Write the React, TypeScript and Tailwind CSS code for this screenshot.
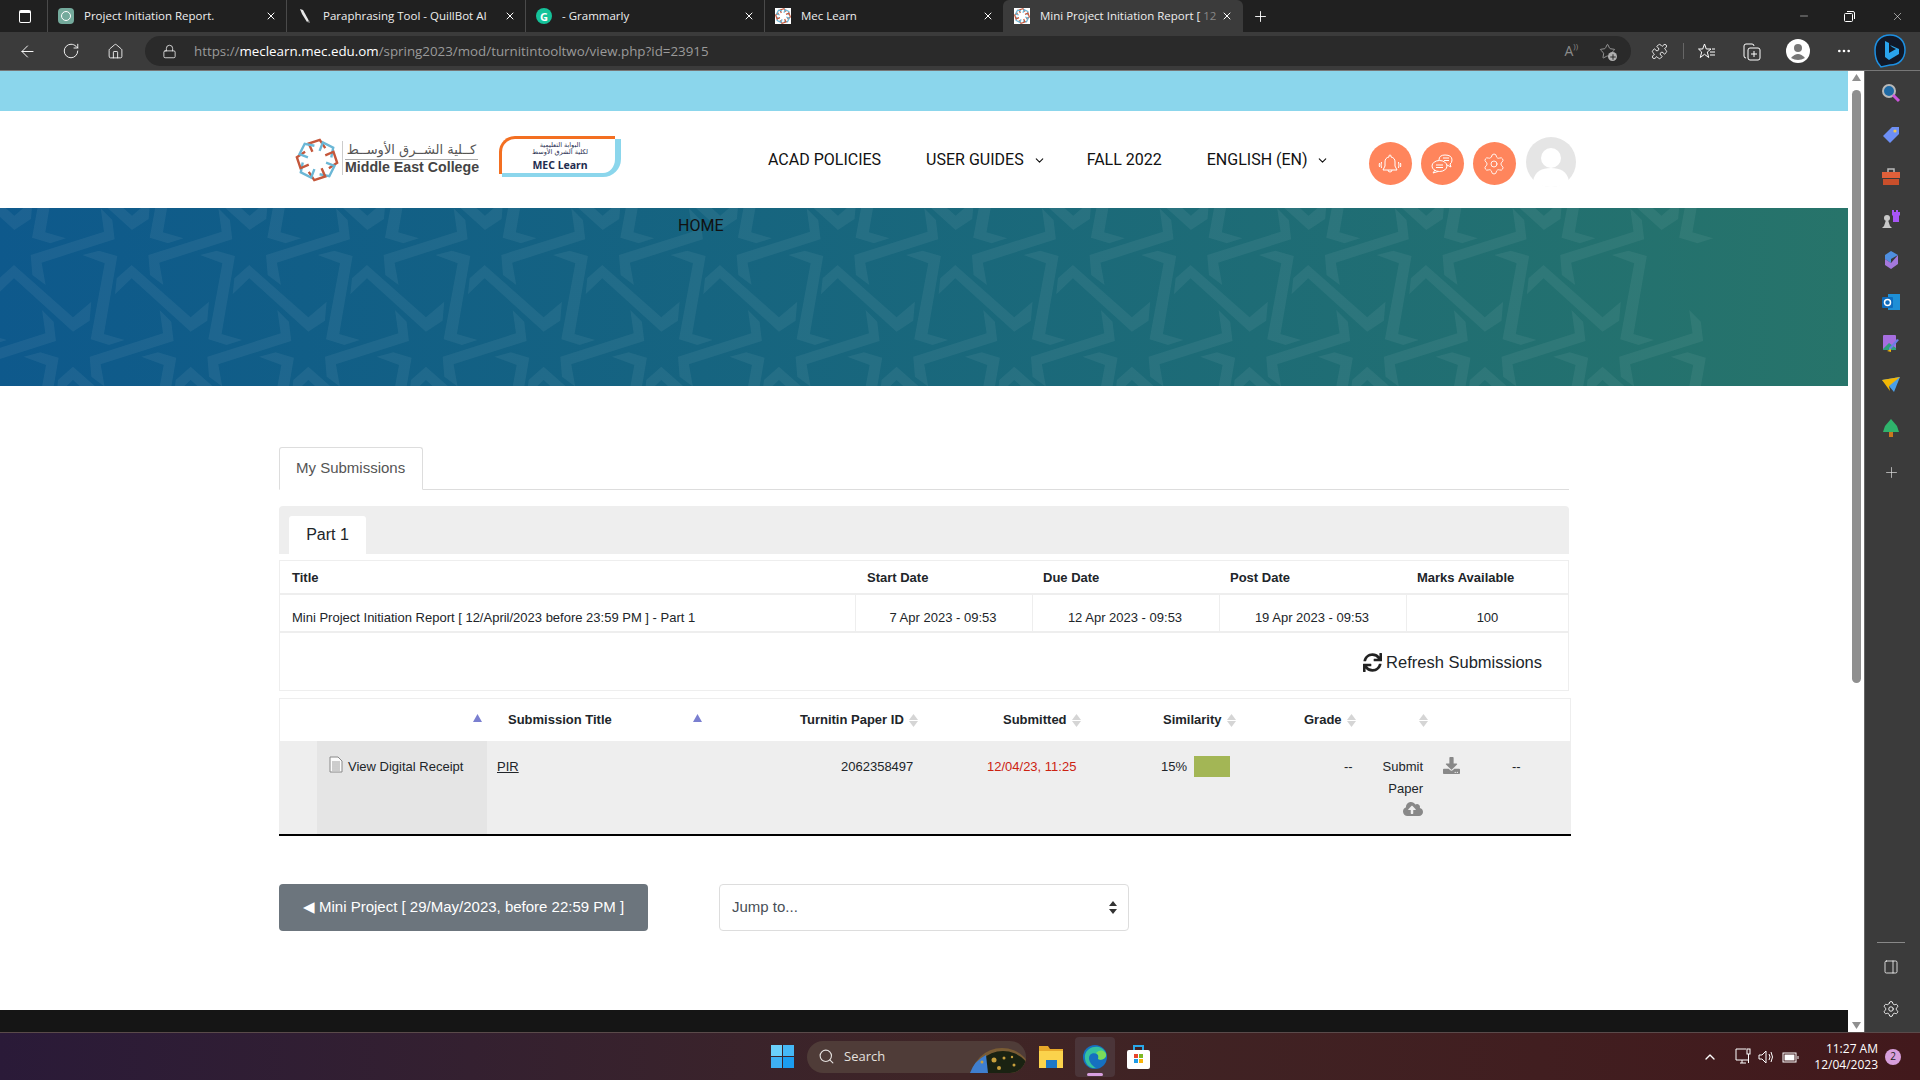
import React from "react";
import { Settings, ChevronDown, ChevronUp, Lock, Home, RotateCw, ArrowLeft, X, Plus, Minus, Star, Search, Puzzle, MoreHorizontal, PanelRight } from "lucide-react";
import { FaSync, FaDownload, FaCloudUploadAlt } from "react-icons/fa";

const tabs = ["Project Initiation Report.", "Paraphrasing Tool - QuillBot AI", "- Grammarly", "Mec Learn"];

function StarRing({ size, stroke }: { size: number; stroke: number }) {
  const angles = [0, 45, 90, 135, 180, 225, 270, 315];
  return (
    <svg width={size} height={size} viewBox="0 0 48 48" fill="none" strokeWidth={stroke} strokeLinejoin="miter">
      {angles.map((a, i) => (
        <path key={a} d="M19 15 L15 6 L27 2 L33 11" transform={`rotate(${a} 24 24)`} stroke={i % 2 === 0 ? "#c4573b" : "#6bb7d6"} />
      ))}
    </svg>
  );
}

function Favicon({ i }: { i: number }) {
  if (i === 0) return <div className="w-4 h-4 rounded-sm bg-[#74aa9c] flex items-center justify-center"><div className="w-2.5 h-2.5 rounded-full border border-white" /></div>;
  if (i === 1) return <svg width="16" height="16" viewBox="0 0 16 16"><path d="M3 1 L6 2 L12 13 L10 14 L5 6 Z" fill="#e8e8e8" /><path d="M10 14 L13 15 L12 12 Z" fill="#888" /></svg>;
  if (i === 2) return <div className="w-4 h-4 rounded-full bg-[#15c39a] flex items-center justify-center text-white text-[11px] font-bold leading-none">G</div>;
  return <div className="w-4 h-4 bg-white flex items-center justify-center"><StarRing size={16} stroke={3.6} /></div>;
}

function Tab({ title, i }: { title: string; i: number }) {
  return (
    <div className="w-[239px] h-[32px] flex items-center pl-[10px] border-l border-[#4a4a4a] shrink-0">
      <Favicon i={i} />
      <span className="ml-[10px] text-[11.5px] text-[#eeeeee] w-[181px] whitespace-nowrap">{title}</span>
      <X size={12} className="text-white" />
    </div>
  );
}

function AddressBar() {
  return (
    <div className="h-[39px] bg-[#3b3b3b] border-b border-[#777777] flex items-center text-white">
      <ArrowLeft size={19} strokeWidth={1.2} className="ml-[18px]" />
      <RotateCw size={18} strokeWidth={1.2} className="ml-[25px]" />
      <Home size={17} strokeWidth={1.2} className="ml-[27px]" />
      <div className="ml-[21px] w-[1486px] h-[30px] rounded-full bg-[#2a2a2a] flex items-center pl-[17px] shrink-0">
        <Lock size={15} strokeWidth={1.2} />
        <span className="ml-[17px] text-[13.35px] text-[#9a9a9a] whitespace-nowrap"><span>https://</span><span className="text-white">meclearn.mec.edu.om</span>/spring2023/mod/turnitintooltwo/view.php?id=23915</span>
      </div>
    </div>
  );
}

function Sort() {
  return (
    <span className="w-[9px] flex flex-col items-center gap-[1px] shrink-0">
      <svg width="9" height="6" viewBox="0 0 9 6"><path d="M4.5 0 L9 6 H0 Z" fill="#d5d5d5" /></svg>
      <svg width="9" height="6" viewBox="0 0 9 6"><path d="M4.5 6 L9 0 H0 Z" fill="#d5d5d5" /></svg>
    </span>
  );
}
function SortUp() {
  return <svg width="9" height="8" viewBox="0 0 9 8" className="-mt-[5px] shrink-0"><path d="M4.5 0 L9 8 H0 Z" fill="#7a7fd0" /></svg>;
}

function Hero() {
  const A = "395,195 572,352 627,305 622,362 572,395 395,235 345,283 350,235";
  const B = "445,165 665,95 655,25 690,60 697,118 478,188 490,255 450,225";
  const C = "600,165 650,152 705,168 665,402 727,420 680,435 625,418 667,190";
  const items: React.ReactNode[] = [];
  for (let r = -2; r < 2; r++) {
    for (let c = -2; c < 14; c++) {
      const x = c * 353 + (r % 2 !== 0 ? 177 : 0) - 353;
      const y = r * 305 - 24;
      [A, B, C].forEach((p, k) =>
        items.push(<polygon key={`${r}-${c}-${k}`} points={p} transform={`translate(${x} ${y})`} fill="#ffffff" fillOpacity="0.06" />)
      );
    }
  }
  return (
    <div className="relative h-[178px] bg-gradient-to-r from-[#0e598c] to-[#27746a] overflow-hidden">
      <svg className="absolute inset-0" width="1848" height="178">
        <g transform="scale(0.3333)">{items}</g>
      </svg>
      <div className="relative pl-[678px] pt-[8px] text-[16px] leading-[20px] text-[#111111] font-['Roboto',sans-serif]">HOME</div>
    </div>
  );
}

function MecLogo() {
  return (
    <div className="flex items-center ml-[295px]">
      <StarRing size={44} stroke={2.6} />
      <div className="ml-[3px] w-[136px] border-l border-[#cccccc] pl-[2px] flex flex-col font-['Liberation_Sans',sans-serif] -mt-[3px]">
        <span dir="rtl" className="text-[13px] leading-[18px] text-[#555555] border-b border-[#aaaaaa] text-center font-['DejaVu_Sans',sans-serif] whitespace-nowrap">كــلية الشــرق الأوســط</span>
        <span className="text-[14.2px] leading-[15px] font-bold text-[#444444] whitespace-nowrap">Middle East College</span>
      </div>
      <div className="ml-[21px] w-[122px] h-[41px] relative -mt-[6px]">
        <div className="absolute left-[3px] top-[3px] right-0 bottom-0 rounded-br-[18px] border-r-[6px] border-b-[4px] border-[#8bd6ec]" />
        <div className="absolute left-0 top-0 right-[6px] bottom-[3px] rounded-tl-[16px] border-l-[3px] border-t-[3px] border-[#f36f21]" />
        <div className="relative h-full flex flex-col items-center text-[#1f2d50] font-['Noto_Sans',sans-serif] pt-[6px]">
          <span dir="rtl" className="text-[6.5px] leading-[7px] font-['DejaVu_Sans',sans-serif] whitespace-nowrap">البوابة التعليمية</span>
          <span dir="rtl" className="text-[6.5px] leading-[7px] font-['DejaVu_Sans',sans-serif] whitespace-nowrap">لكلية الشرق الأوسط</span>
          <span className="text-[10.5px] leading-[14px] font-bold mt-[2px]">MEC Learn</span>
        </div>
      </div>
    </div>
  );
}

function OrangeBtn({ children }: { children: React.ReactNode }) {
  return <div className="w-[43px] h-[43px] rounded-full bg-[#ff855c] flex items-center justify-center text-white shrink-0">{children}</div>;
}

function SiteHeader() {
  return (
    <div className="h-[97px] bg-white flex items-center font-['Roboto',sans-serif] text-[16px] text-[#111111]">
      <MecLogo />
      <span className="ml-[147px] whitespace-nowrap">ACAD POLICIES</span>
      <span className="ml-[45px] mt-[1px] flex items-center gap-[9px] whitespace-nowrap">USER GUIDES <ChevronDown size={13} /></span>
      <span className="ml-[41px] whitespace-nowrap">FALL 2022</span>
      <span className="ml-[45px] mt-[1px] flex items-center gap-[8px] whitespace-nowrap">ENGLISH (EN) <ChevronDown size={13} /></span>
      <div className="ml-[40px] flex items-center gap-[9px] mt-[8px]">
        <OrangeBtn>
          <svg width="24" height="24" viewBox="0 0 24 24" fill="none" stroke="#fff" strokeWidth="1">
            <path d="M12 3 a1 1 0 0 1 1 1 v1 a5 5 0 0 1 4 5 v4 l2 4 H5 l2-4 v-4 a5 5 0 0 1 4-5 V4 a1 1 0 0 1 1-1Z M10 18 a2 2 0 0 0 4 0" />
            <path d="M3.5 10 q-1 3 0 6 M1.5 11 q-.6 2 0 4 M20.5 10 q1 3 0 6 M22.5 11 q.6 2 0 4" />
          </svg>
        </OrangeBtn>
        <OrangeBtn>
          <svg width="24" height="24" viewBox="0 0 24 24" fill="none" stroke="#fff" strokeWidth="1">
            <path d="M9 8 Q9 3 15 3 Q22 3 22 8 Q22 11 20 12 L21 15 L17 13" />
            <ellipse cx="9.5" cy="14" rx="7.5" ry="5.5" fill="#ff855c" />
            <path d="M5 18 L3 21 L8 19.5 M6 13 H13 M6 15.5 H13 M13 6 H19 M14 8.5 H19" />
          </svg>
        </OrangeBtn>
        <OrangeBtn><Settings size={24} strokeWidth={0.9} /></OrangeBtn>
        <svg width="50" height="50" viewBox="0 0 50 50" className="-mt-[4px] ml-[1px]">
          <circle cx="25" cy="25" r="25" fill="#e5e5e5" />
          <circle cx="25" cy="21" r="10" fill="#ffffff" />
          <path d="M7 44 C9 34 16 31 25 31 C34 31 41 34 43 44 C38 48 32 50 25 50 C18 50 12 48 7 44 Z" fill="#ffffff" />
        </svg>
      </div>
    </div>
  );
}

const g1 = "grid grid-cols-[575px_177px_187px_187px_164px]";
const g2 = "grid grid-cols-[38px_170px_283px_200px_180px_140px_85px_60px_55px_74px]";

function Content() {
  return (
    <div className="bg-white pl-[279px] w-[1569px] pt-[61px] h-[624px] font-['Liberation_Sans',sans-serif] text-[13px] text-[#212529]">
      <div className="flex border-b border-[#dddddd] h-[43px]">
        <div className="w-[144px] h-[43px] border border-[#dddddd] border-b-white rounded-t-[3px] pl-[16px] flex items-center text-[15px] text-[#555555] bg-white">My Submissions</div>
      </div>
      <div className="mt-[16px] h-[48px] bg-[#eeeeee] rounded-t-[4px] pl-[10px] pt-[10px]">
        <div className="w-[77px] h-[38px] bg-white rounded-t-[3px] flex items-center justify-center text-[16px]">Part 1</div>
      </div>
      <div className="mt-[6px] border border-[#eeeeee] w-[1290px]">
        <div className={`${g1} h-[34px] pt-[2px] items-center font-bold border-b-2 border-[#eeeeee]`}>
          <div className="pl-[12px]">Title</div>
          <div className="pl-[12px]">Start Date</div>
          <div className="pl-[11px]">Due Date</div>
          <div className="pl-[11px]">Post Date</div>
          <div className="pl-[11px]">Marks Available</div>
        </div>
        <div className={`${g1} h-[38px] border-b-2 border-[#eeeeee]`}>
          <div className="pl-[12px] pt-[13px] whitespace-nowrap">Mini Project Initiation Report [ 12/April/2023 before 23:59 PM ] - Part 1</div>
          <div className="border-l border-[#eeeeee] text-center pt-[13px] pr-[2px]">7 Apr 2023 - 09:53</div>
          <div className="border-l border-[#eeeeee] text-center pt-[13px] pr-[2px]">12 Apr 2023 - 09:53</div>
          <div className="border-l border-[#eeeeee] text-center pt-[13px] pr-[2px]">19 Apr 2023 - 09:53</div>
          <div className="border-l border-[#eeeeee] text-center pt-[13px] pr-[2px]">100</div>
        </div>
        <div className="h-[57px] pt-[2px] flex items-center justify-end pr-[26px] gap-[4px] text-[16.5px]">
          <FaSync size={19} className="text-[#222222]" />
          <span>Refresh Submissions</span>
        </div>
      </div>
      <div className="mt-[7px] w-[1292px] border-t border-x border-[#eeeeee]">
        <div className={`${g2} h-[42px] items-center font-bold`}>
          <div />
          <div className="flex justify-end pr-[6px]"><SortUp /></div>
          <div className="flex items-center pl-[20px] gap-[82px]"><span className="w-[103px] whitespace-nowrap">Submission Title</span><SortUp /></div>
          <div className="flex items-center pl-[29px] gap-[5px] whitespace-nowrap">Turnitin Paper ID <Sort /></div>
          <div className="flex items-center pl-[32px] gap-[5px]">Submitted <Sort /></div>
          <div className="flex items-center pl-[12px] gap-[5px]">Similarity <Sort /></div>
          <div className="flex items-center pl-[13px] gap-[5px]">Grade <Sort /></div>
          <div className="flex items-center pl-[43px]"><Sort /></div>
          <div />
          <div />
        </div>
        <div className={`${g2} h-[95px] bg-[#eeeeee] border-b-2 border-black -mx-px pt-[16px]`}>
          <div className="-mt-[16px]" />
          <div className="-mt-[16px] pt-[15px] bg-[#e5e5e5] flex items-start pl-[12px] gap-[5px]">
            <svg width="14" height="17" viewBox="0 0 14 17" fill="#fbfbfb" stroke="#888888" strokeWidth="1" className="shrink-0">
              <path d="M1 1 H9 L13 5 V16 H1 Z" />
              <path d="M3 6 H11 M3 8 H11 M3 10 H11 M3 12 H11 M3 14 H11" strokeWidth="0.8" />
            </svg>
            <span className="whitespace-nowrap mt-[1px]">View Digital Receipt</span>
          </div>
          <div className="pl-[10px] underline">PIR</div>
          <div className="pl-[71px]">2062358497</div>
          <div className="pl-[17px] text-[#cc2211] whitespace-nowrap">12/04/23, 11:25</div>
          <div className="pl-[11px] flex items-start gap-[7px]"><span>15%</span><div className="w-[36px] h-[21px] bg-[#a3b655] -mt-[1px]" /></div>
          <div className="pl-[54px]">--</div>
          <div className="flex flex-col items-end pr-[12px] leading-[21.5px] -mt-[1px]">
            <span>Submit</span>
            <span>Paper</span>
            <FaCloudUploadAlt size={20} className="text-[#888888]" />
          </div>
          <div className="pl-[8px]"><FaDownload size={17} className="text-[#888888]" /></div>
          <div className="pl-[22px]">--</div>
        </div>
      </div>
      <div className="mt-[48px] flex gap-[71px]">
        <div className="w-[369px] h-[47px] rounded-[4px] bg-[#6c757d] text-white flex items-center justify-center text-[15px]">◀ Mini Project [ 29/May/2023, before 22:59 PM ]</div>
        <div className="w-[410px] h-[47px] rounded-[4px] border border-[#dddddd] flex items-center justify-between pl-[12px] pr-[11px] text-[#495057] text-[15px]">
          <span>Jump to...</span>
          <svg width="8" height="13" viewBox="0 0 8 13"><path d="M4 0 L8 5 H0 Z M4 13 L8 8 H0 Z" fill="#333333" /></svg>
        </div>
      </div>
    </div>
  );
}

function SideIcons() {
  return (
    <div className="w-[56px] bg-[#3b3b3b] border-l border-[#666666] flex flex-col items-center pt-[12px] pr-[3px] shrink-0">
      <svg width="20" height="20" viewBox="0 0 20 20"><circle cx="8" cy="8" r="6" fill="#1f6aa5" stroke="#b8b8b8" strokeWidth="2" /><path d="M12 12 L18 18" stroke="#cc55dd" strokeWidth="3" /></svg>
      <svg className="mt-[22px]" width="20" height="20" viewBox="0 0 20 20"><path d="M2 11 L11 2 L18 2 L18 9 L9 18 Z" fill="#6d8ff5" /><circle cx="14" cy="6" r="1.6" fill="#f2c94c" /></svg>
      <svg className="mt-[22px]" width="20" height="20" viewBox="0 0 20 20"><rect x="7" y="2" width="6" height="4" fill="none" stroke="#bbbbbb" strokeWidth="1.5" /><rect x="1" y="5" width="18" height="6" fill="#e0603a" /><rect x="2" y="12" width="16" height="6" fill="#c94f2b" /></svg>
      <svg className="mt-[22px]" width="20" height="20" viewBox="0 0 20 20"><circle cx="6" cy="9" r="3" fill="#c8c8c8" /><path d="M1 19 L3 17 L5 11 H7 L9 17 L11 19 Z" fill="#c8c8c8" /><path d="M11 1 H13 V3 H15 V1 H17 V3 H19 V1 V6 L18 7 V13 H12 V7 L11 6 Z" fill="#a855f7" /></svg>
      <svg className="mt-[21px]" width="20" height="20" viewBox="0 0 20 20"><path d="M4 5 L10 1 L17 5 L10 9 V13 L4 9 Z" fill="#4f8fe0" /><path d="M17 5 V14 L10 19 L4 15 V9 L10 13 Z" fill="#a478dd" /></svg>
      <svg className="mt-[22px]" width="20" height="20" viewBox="0 0 20 20"><rect x="7" y="2" width="12" height="16" fill="#1e8fd6" /><rect x="1" y="5" width="11" height="11" rx="1" fill="#0f6cbd" /><circle cx="6.5" cy="10.5" r="3" fill="none" stroke="#ffffff" strokeWidth="1.5" /></svg>
      <svg className="mt-[22px]" width="20" height="20" viewBox="0 0 20 20"><rect x="2" y="1" width="13" height="15" rx="1" fill="#a66ee0" /><path d="M2 15 L8 9 L15 14 V16 H2 Z" fill="#2fa07b" /><path d="M18 6 L11 14 L8 17 L8 14 L16 5 Z" fill="#6b7ee8" /><path d="M6 17 L10 15 L10 18 Z" fill="#f2b705" /></svg>
      <svg className="mt-[21px]" width="20" height="20" viewBox="0 0 20 20"><path d="M1 5 L19 2 L13 17 L8 11 Z" fill="#4a9fe8" /><path d="M1 5 L19 2 L8 11 L9 16 Z" fill="#f2b705" /></svg>
      <svg className="mt-[23px]" width="20" height="20" viewBox="0 0 20 20"><path d="M10 1 L16 8 L18 14 H2 L4 8 Z" fill="#2fb46c" /><rect x="8" y="14" width="4" height="5" fill="#c9781f" /></svg>
      <Plus size={17} strokeWidth={1} className="mt-[26px] text-[#dddddd]" />
      <div className="mt-auto w-[28px] border-t border-[#888888]" />
      <PanelRight size={16} strokeWidth={1.2} className="mt-[16px] text-white" />
      <Settings size={18} strokeWidth={1.2} className="mt-[25px] mb-[14px] text-white" />
    </div>
  );
}

function Taskbar() {
  return (
    <div className="h-[48px] border-t border-[#5a4a4a] bg-gradient-to-r from-[#2a1a38] via-[#3f2526] to-[#42191c] flex items-center text-white font-['Open_Sans',sans-serif]">
      <svg className="ml-[771px]" width="23" height="23" viewBox="0 0 23 23"><rect width="11" height="11" fill="#6bd0fb" /><rect x="12" width="11" height="11" fill="#45b8f6" /><rect y="12" width="11" height="11" fill="#3eb0f3" /><rect x="12" y="12" width="11" height="11" fill="#1b9df0" /></svg>
      <div className="ml-[13px] w-[219px] h-[32px] rounded-full bg-[#4f3c38] flex items-center pl-[11px] text-[13px] text-[#e4e0de] relative overflow-hidden">
        <Search size={17} strokeWidth={1.6} />
        <span className="ml-[9px]">Search</span>
        <svg className="absolute right-0 top-0" width="58" height="32" viewBox="0 0 58 32">
          <circle cx="34" cy="38" r="31" fill="#7a5c34" />
          <circle cx="35" cy="40" r="30" fill="#1a2212" />
          <path d="M2 32 Q6 20 18 14 L20 32 Z" fill="#3f7fd0" />
          <circle cx="26" cy="19" r="2.5" fill="#c9a03c" /><circle cx="36" cy="17" r="1.5" fill="#c9a03c" /><circle cx="44" cy="16" r="1.2" fill="#c9a03c" /><circle cx="14" cy="21" r="1.5" fill="#c9a03c" /><circle cx="31" cy="27" r="2" fill="#c9a03c" /><circle cx="46" cy="24" r="1.5" fill="#c9a03c" />
        </svg>
      </div>
      <svg className="ml-[13px]" width="24" height="22" viewBox="0 0 24 22"><path d="M0 0 H9 L11 3 H24 V22 H0 Z" fill="#e8a92a" /><rect y="5" width="24" height="17" fill="#fbd34c" /><rect x="7" y="14" width="11" height="8" fill="#1d78c8" /></svg>
      <div className="ml-[12px] w-[40px] h-[40px] rounded-[4px] bg-[#4b3539] flex items-center justify-center relative">
        <svg width="24" height="24" viewBox="0 0 24 24"><circle cx="12" cy="12" r="12" fill="#1670c0" /><path d="M2 10 C4 1 18 -2 23 8 C24 13 19 16 15 14 C18 9 10 6 7 10 C4 14 8 20 13 23 C6 24 1 18 2 10 Z" fill="#35c1a0" /><path d="M23 9 C24 13 19 16 15 14 C16 11 15 9 13 8 C17 4 21 5 23 9 Z" fill="#7bdc5b" /></svg>
        <div className="absolute bottom-[1px] w-[16px] h-[3px] rounded-full bg-[#d8a0e0]" />
      </div>
      <svg className="ml-[12px]" width="23" height="24" viewBox="0 0 23 24"><path d="M7 6 V1 H16 V6" fill="none" stroke="#29a8e8" strokeWidth="2" /><rect y="5" width="23" height="19" rx="2" fill="#ffffff" /><rect x="7" y="9" width="4" height="4" fill="#e8452c" /><rect x="12" y="9" width="4" height="4" fill="#7db824" /><rect x="7" y="14" width="4" height="4" fill="#1e9be8" /><rect x="12" y="14" width="4" height="4" fill="#f9b40a" /></svg>
      <ChevronUp size={16} className="ml-[552px]" />
      <svg className="ml-[17px]" width="16" height="17" viewBox="0 0 16 17" fill="none" stroke="#fff" strokeWidth="1"><path d="M11 1 H1 V12 H13 M5 15 H11 M7 12 V15" /><rect x="12" y="1" width="3" height="5" /><path d="M13.5 6 V15" /></svg>
      <svg className="ml-[7px]" width="17" height="14" viewBox="0 0 17 14" fill="none" stroke="#fff" strokeWidth="1"><path d="M1 5 H4 L8 1 V13 L4 9 H1 Z M11 4 Q13 7 11 10 M13 2 Q16 7 13 12" /></svg>
      <svg className="ml-[7px]" width="17" height="12" viewBox="0 0 17 12" fill="none" stroke="#fff" strokeWidth="1"><rect x="1" y="2" width="13" height="9" /><rect x="3" y="4" width="9" height="5" fill="#fff" /><path d="M16 5 V8" /></svg>
      <div className="ml-[9px] w-[70px] flex flex-col items-end text-[12px] leading-[16px] text-white whitespace-nowrap">
        <span>11:27 AM</span>
        <span>12/04/2023</span>
      </div>
      <div className="ml-[7px] w-[16px] h-[16px] rounded-full bg-[#d89fdc] text-[#222222] text-[10px] flex items-center justify-center">2</div>
    </div>
  );
}

function Toolbar() {
  return (
    <div className="absolute right-0 top-0 h-[38px] text-[#dddddd]">
      <span className="text-[14px] text-[#8a8a8a] absolute right-[342px] top-[8px] whitespace-nowrap">A<span className="text-[8px] align-top">))</span></span>
      <div className="absolute right-[304px] top-[11px]">
        <Star size={17} strokeWidth={1.1} className="text-[#b0b0b0]" />
        <div className="absolute -right-[1px] -bottom-[1px] w-[9px] h-[9px] rounded-full bg-[#b0b0b0] text-[#2a2a2a] flex items-center justify-center"><Plus size={8} strokeWidth={3} /></div>
      </div>
      <Puzzle size={17} strokeWidth={1.2} className="absolute right-[252px] top-[11px] text-white" />
      <div className="absolute right-[236px] top-[11px] h-[16px] border-l border-[#666666]" />
      <div className="absolute right-[204px] top-[11px]">
        <svg width="18" height="17" viewBox="0 0 18 17" fill="none" stroke="#fff" strokeWidth="1"><path d="M6.5 1 L8.3 6 H13 L9.3 9 L10.7 14.5 L6.5 11.3 L2.3 14.5 L3.7 9 L0.5 6 H4.7 Z" /><path d="M12 9 H17 M12 12 H17 M14 6 H17" /></svg>
      </div>
      <div className="absolute right-[159px] top-[11px]">
        <svg width="18" height="18" viewBox="0 0 18 18" fill="none" stroke="#fff" strokeWidth="1"><path d="M3 15 Q1 15 1 13 V3 Q1 1 3 1 H9 Q11 1 11 3" /><rect x="5" y="5" width="12" height="12" rx="2" /><path d="M11 8 V14 M8 11 H14" /></svg>
      </div>
      <svg className="absolute right-[110px] top-[7px]" width="24" height="24" viewBox="0 0 24 24"><circle cx="12" cy="12" r="12" fill="#ffffff" /><circle cx="12" cy="9" r="4" fill="#777777" /><path d="M5 19 Q12 11 19 19 Q12 23 5 19 Z" fill="#777777" /></svg>
      <MoreHorizontal size={16} className="absolute right-[68px] top-[11px] text-white" />
      <svg className="absolute right-[14px] top-[2px]" width="32" height="34" viewBox="0 0 32 34"><path d="M16 1 C25 1 31 7 31 16 C31 25 25 31 16 31 L7 33 L4 29 C2 26 1 21 1 16 C1 7 7 1 16 1 Z" fill="#111827" stroke="#1d8fe1" strokeWidth="1.5" /><path d="M11 7 L15 9 V19 L22 15 L18 13 L16 11 L25 15 V20 L15 26 L11 23 Z" fill="#2aa4ee" /></svg>
    </div>
  );
}

export default function App() {
  return (
    <div className="w-[1920px] h-[1080px] overflow-hidden flex flex-col bg-white font-['Open_Sans',sans-serif]">
      <div className="h-[32px] bg-[#202020] flex items-center shrink-0">
        <div className="w-[47px] flex justify-center pl-[2px]"><div className="w-[12px] h-[13px] rounded-[2px] border border-white border-t-[3px]" /></div>
        {tabs.map((t, i) => <Tab key={t} title={t} i={i} />)}
        <div className="w-[240px] h-[32px] bg-[#3b3b3b] rounded-t-[6px] flex items-center pl-[11px] shrink-0">
          <Favicon i={3} />
          <span className="ml-[10px] text-[11.5px] text-[#eeeeee] w-[181px] whitespace-nowrap">Mini Project Initiation Report [ <span className="text-[#888888]">12</span></span>
          <X size={12} className="text-white" />
        </div>
        <Plus size={17} strokeWidth={1.3} className="ml-[9px] text-white" />
        <div className="ml-auto flex items-center text-white">
          <Minus size={12} strokeWidth={1} className="mr-[34px]" />
          <svg width="11" height="11" viewBox="0 0 11 11" fill="none" stroke="#fff" strokeWidth="1" className="mr-[36px]"><rect x="0.5" y="2.5" width="8" height="8" rx="1" /><path d="M3 0.5 H9 Q10.5 0.5 10.5 2 V8" /></svg>
          <X size={13} strokeWidth={1} className="mr-[16px]" />
        </div>
      </div>
      <div className="relative shrink-0">
        <AddressBar />
        <Toolbar />
      </div>
      <div className="flex flex-1 min-h-0">
        <div className="w-[1848px] shrink-0 flex flex-col">
          <div className="h-[40px] bg-[#8bd6ec] shrink-0" />
          <SiteHeader />
          <Hero />
          <Content />
          <div className="flex-1 bg-[#151515]" />
        </div>
        <div className="w-[16px] bg-white flex flex-col items-center shrink-0 pt-[3px]">
          <svg width="9" height="7" viewBox="0 0 9 7"><path d="M4.5 0 L9 7 H0 Z" fill="#8f8f8f" /></svg>
          <div className="mt-[9px] w-[9px] h-[593px] rounded-full bg-[#8f8f8f]" />
          <svg className="mt-auto mb-[3px]" width="9" height="7" viewBox="0 0 9 7"><path d="M4.5 7 L9 0 H0 Z" fill="#8f8f8f" /></svg>
        </div>
        <SideIcons />
      </div>
      <Taskbar />
    </div>
  );
}
